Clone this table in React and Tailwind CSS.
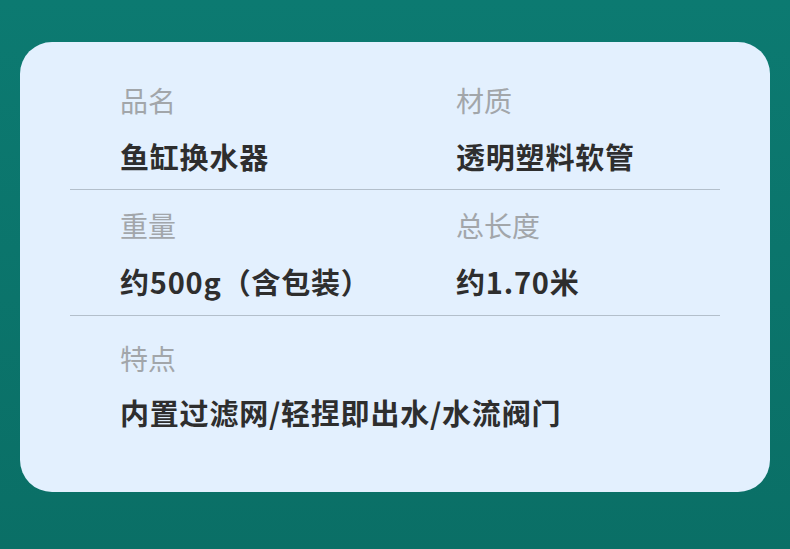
const rows = [
  {
    pad: "pt-[41px] pb-[16px]",
    gap: "mt-[22px]",
    items: [
      { label: "品名", value: "鱼缸换水器" },
      { label: "材质", value: "透明塑料软管" },
    ],
  },
  {
    pad: "pt-[18px] pb-[17px]",
    gap: "mt-[22px]",
    items: [
      { label: "重量", value: "约500g（含包装）" },
      { label: "总长度", value: "约1.70米" },
    ],
  },
  {
    pad: "pt-[25px] pb-[63px]",
    gap: "mt-[20px]",
    last: true,
    items: [{ label: "特点", value: "内置过滤网/轻捏即出水/水流阀门" }],
  },
];

export default function App() {
  return (
    <div
      className="h-[549px] w-[790px] bg-gradient-to-b from-[#0c7a71] to-[#0a6f66] pt-[42px] px-[20px]"
      style={{ fontFamily: '"Noto Sans CJK SC", "Noto Sans", sans-serif' }}
    >
      <div className="rounded-[32px] bg-[#e3f0fe] px-[50px]">
        {rows.map((row, i) => (
          <div
            key={i}
            className={`flex pl-[50px] ${row.pad} ${row.last ? "" : "border-b border-[#b3bfcb]"}`}
          >
            {row.items.map((item, j) => (
              <div key={j} className={j === 0 && row.items.length > 1 ? "w-[336px]" : ""}>
                <p className="text-[28px] leading-[34px] text-[#a2a6aa]">{item.label}</p>
                <p className={`${row.gap} text-[29px] font-bold leading-[34px] tracking-[0.8px] text-[#2e2e2e]`}>
                  {item.value}
                </p>
              </div>
            ))}
          </div>
        ))}
      </div>
    </div>
  );
}
